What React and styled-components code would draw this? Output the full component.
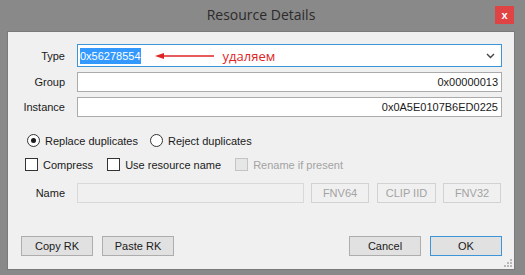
import React from "react";
import styled, { createGlobalStyle } from "styled-components";

const GlobalStyle = createGlobalStyle`
  html, body {
    margin: 0;
    padding: 0;
    background: #898989;
  }
  * {
    box-sizing: border-box;
  }
`;

const Frame = styled.div`
  width: 525px;
  height: 275px;
  background: #898989;
  display: flex;
  flex-direction: column;
  padding: 0 10px 5px 7px;
  font-family: "Liberation Sans", Arial, sans-serif;
  font-size: 11px;
  color: #1a1a1a;
`;

const TitleBar = styled.div`
  height: 31px;
  display: grid;
  grid-template-columns: 1fr auto 1fr;
  align-items: start;
`;

const Title = styled.div`
  grid-column: 2;
  padding-top: 5px;
  font-family: "Open Sans", "Noto Sans", sans-serif;
  font-size: 14px;
  color: #2b2b2b;
`;

const Close = styled.div`
  grid-column: 3;
  justify-self: end;
  margin-top: 6px;
  margin-right: 1px;
  width: 19px;
  height: 18px;
  background: #e04343;
  color: #fff;
  font-size: 11px;
  font-weight: bold;
  display: flex;
  align-items: center;
  justify-content: center;
`;

const Body = styled.div`
  flex: 1;
  background: #f0f0f0;
  border: 1px solid #7a7a7a;
  padding: 12px 12px 0 0;
  display: flex;
  flex-direction: column;
  position: relative;
`;

const FieldRow = styled.div`
  display: flex;
  align-items: center;
  margin-top: ${(p) => p.$top || 0}px;
`;

const Label = styled.div`
  width: 57px;
  text-align: right;
  margin-right: 12px;
`;

const Field = styled.div`
  flex: 1;
  height: ${(p) => p.$h || 20}px;
  border: 1px solid ${(p) => (p.$focus ? "#3b95d8" : "#ababab")};
  background: #fff;
  display: flex;
  align-items: center;
  justify-content: ${(p) => (p.$right ? "flex-end" : "flex-start")};
  padding: 0 3px 0 2px;
`;

const Selected = styled.span`
  background: #3399ff;
  color: #fff;
  padding: 2px 0;
`;

const Note = styled.div`
  display: flex;
  align-items: center;
  margin-left: 14px;
  color: #e02424;
  font-family: "Open Sans", "Noto Sans", sans-serif;
  font-size: 13px;
  gap: 8px;
`;

const Chevron = styled.svg`
  margin-left: auto;
  margin-right: 3px;
`;

const OptionRow = styled.div`
  display: flex;
  align-items: center;
  margin-top: ${(p) => p.$top || 0}px;
  padding-left: ${(p) => p.$left || 0}px;
`;

const Radio = styled.span`
  width: 13px;
  height: 13px;
  border-radius: 50%;
  border: 1px solid #333;
  background: #fff;
  display: inline-flex;
  align-items: center;
  justify-content: center;
  margin-right: 5px;
  &::after {
    content: "";
    width: 5px;
    height: 5px;
    border-radius: 50%;
    background: ${(p) => (p.$on ? "#1a1a1a" : "transparent")};
  }
`;

const Box = styled.span`
  width: 13px;
  height: 13px;
  border: 1px solid ${(p) => (p.$disabled ? "#c4c4c4" : "#333")};
  background: ${(p) => (p.$disabled ? "#e6e6e6" : "#fff")};
  margin-right: 5px;
`;

const OptText = styled.span`
  color: ${(p) => (p.$disabled ? "#a3a3a3" : "#1a1a1a")};
  margin-right: ${(p) => p.$gap || 0}px;
`;

const NameField = styled.div`
  width: 227px;
  height: 20px;
  border: 1px solid #d9d9d9;
  background: #f0f0f0;
  margin-right: 7px;
`;

const Button = styled.div`
  width: ${(p) => p.$w || 72}px;
  height: 20px;
  display: flex;
  align-items: center;
  justify-content: center;
  border: 1px solid
    ${(p) => (p.$primary ? "#3b95d8" : p.$disabled ? "#d2d2d2" : "#adadad")};
  background: ${(p) => (p.$disabled ? "#f0f0f0" : "#e1e1e1")};
  color: ${(p) => (p.$disabled ? "#a3a3a3" : "#1a1a1a")};
  margin-right: ${(p) => p.$gap || 0}px;
`;

const Footer = styled.div`
  margin-top: auto;
  margin-bottom: 13px;
  display: flex;
  align-items: center;
  padding-left: 13px;
`;

const Spacer = styled.div`
  flex: 1;
`;

const Grip = styled.svg`
  position: absolute;
  right: 2px;
  bottom: 2px;
`;

export default function App() {
  return (
    <>
      <GlobalStyle />
      <Frame>
        <TitleBar>
          <Title>Resource Details</Title>
          <Close>x</Close>
        </TitleBar>
        <Body>
          <FieldRow>
            <Label>Type</Label>
            <Field $h={23} $focus>
              <Selected>0x56278554</Selected>
              <Note>
                <svg width="60" height="8" viewBox="0 0 60 8">
                  <path d="M6 4 H59" stroke="#e02424" strokeWidth="1.3" />
                  <path d="M0 4 L9 1 L9 7 Z" fill="#e02424" />
                </svg>
                удаляем
              </Note>
              <Chevron width="9" height="6" viewBox="0 0 9 6">
                <path d="M1 1 L4.5 4.5 L8 1" stroke="#444" strokeWidth="1.4" fill="none" />
              </Chevron>
            </Field>
          </FieldRow>
          <FieldRow $top={5}>
            <Label>Group</Label>
            <Field $right>0x00000013</Field>
          </FieldRow>
          <FieldRow $top={5}>
            <Label>Instance</Label>
            <Field $right>0x0A5E0107B6ED0225</Field>
          </FieldRow>
          <OptionRow $top={17} $left={19}>
            <Radio $on />
            <OptText $gap={12}>Replace duplicates</OptText>
            <Radio />
            <OptText>Reject duplicates</OptText>
          </OptionRow>
          <OptionRow $top={11} $left={17}>
            <Box />
            <OptText $gap={14}>Compress</OptText>
            <Box />
            <OptText $gap={14}>Use resource name</OptText>
            <Box $disabled />
            <OptText $disabled>Rename if present</OptText>
          </OptionRow>
          <FieldRow $top={12}>
            <Label>Name</Label>
            <NameField />
            <Button $w={58} $gap={8} $disabled>FNV64</Button>
            <Button $w={59} $gap={7} $disabled>CLIP IID</Button>
            <Button $w={58} $disabled>FNV32</Button>
          </FieldRow>
          <Footer>
            <Button $gap={9}>Copy RK</Button>
            <Button>Paste RK</Button>
            <Spacer />
            <Button $gap={9}>Cancel</Button>
            <Button $primary>OK</Button>
          </Footer>
          <Grip width="8" height="8" viewBox="0 0 8 8">
            <rect x="6" y="0" width="2" height="2" fill="#b8b8b8" />
            <rect x="3" y="3" width="2" height="2" fill="#b8b8b8" />
            <rect x="6" y="3" width="2" height="2" fill="#b8b8b8" />
            <rect x="0" y="6" width="2" height="2" fill="#b8b8b8" />
            <rect x="3" y="6" width="2" height="2" fill="#b8b8b8" />
            <rect x="6" y="6" width="2" height="2" fill="#b8b8b8" />
          </Grip>
        </Body>
      </Frame>
    </>
  );
}
